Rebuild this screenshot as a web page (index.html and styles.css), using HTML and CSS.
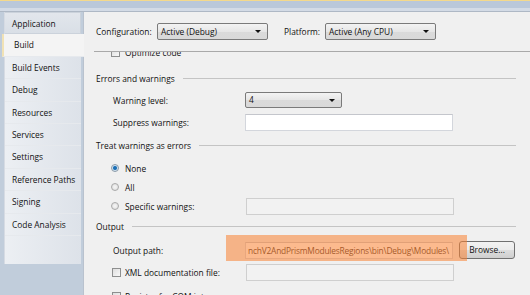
FILE: index.html
```html
<!DOCTYPE html>
<html lang="en">

<head>
    <meta charset="UTF-8">
    <title>Project Properties - Build</title>
    <link rel="stylesheet" href="styles.css">
</head>

<body>
    <div class="top"></div>
    <div class="main">
        <div class="tabs">
            <div class="tab-list">
                <div class="tab">Application</div>
                <div class="tab active">Build</div>
                <div class="tab">Build Events</div>
                <div class="tab">Debug</div>
                <div class="tab">Resources</div>
                <div class="tab">Services</div>
                <div class="tab">Settings</div>
                <div class="tab">Reference Paths</div>
                <div class="tab">Signing</div>
                <div class="tab">Code Analysis</div>
                <div class="tab-tail"></div>
            </div>
        </div>

        <div class="panel">
            <div class="config">
                <span class="config-label">Configuration:</span>
                <div class="select config-select">Active (Debug)<span class="arrow"></span></div>
                <span class="config-label platform">Platform:</span>
                <div class="select config-select">Active (Any CPU)<span class="arrow"></span></div>
            </div>

            <div class="scroll">
                <div class="scroll-inner">
                    <div class="row row-optimize">
                        <span class="check"></span>
                        <span>Optimize code</span>
                    </div>

                    <div class="group">Errors and warnings<span class="rule"></span></div>
                    <div class="row row-level">
                        <span class="label">Warning level:</span>
                        <div class="select level-select">4<span class="arrow"></span></div>
                    </div>
                    <div class="row row-suppress">
                        <span class="label">Suppress warnings:</span>
                        <div class="input"></div>
                    </div>

                    <div class="group group-treat">Treat warnings as errors<span class="rule"></span></div>
                    <div class="row row-none">
                        <span class="radio checked"></span>
                        <span>None</span>
                    </div>
                    <div class="row row-all">
                        <span class="radio"></span>
                        <span>All</span>
                    </div>
                    <div class="row row-specific">
                        <span class="radio"></span>
                        <span class="label short">Specific warnings:</span>
                        <div class="input disabled"></div>
                    </div>

                    <div class="group group-output">Output<span class="rule"></span></div>
                    <div class="row row-path">
                        <span class="label">Output path:</span>
                        <div class="input path">nchV2AndPrismModulesRegions\bin\Debug\Modules\</div>
                        <div class="button">Browse...</div>
                        <div class="highlight"></div>
                    </div>
                    <div class="row row-xml">
                        <span class="check"></span>
                        <span class="label short">XML documentation file:</span>
                        <div class="input disabled"></div>
                    </div>
                    <div class="row row-com">
                        <span class="check"></span>
                        <span>Register for COM interop</span>
                    </div>
                </div>
            </div>
        </div>
    </div>
</body>

</html>
```

FILE: styles.css
```css
* {
    margin: 0;
    padding: 0;
    box-sizing: border-box;
}

body {
    width: 530px;
    height: 295px;
    overflow: hidden;
    background: #c1cddb;
    font-family: 'Open Sans', sans-serif;
    font-size: 8.4px;
    color: #111;
}

.top {
    height: 12px;
    border-top: 1px solid #f4d98c;
    background: linear-gradient(#bac8da 0 7px, #d3dbe6 7px 10px, #aeb8c5 10px);
}

.main {
    display: flex;
    height: 283px;
}

/* left tab column */
.tabs {
    width: 83px;
    padding-left: 4px;
}

.tab-list {
    width: 77px;
    background: linear-gradient(90deg, #eceff3, #dde2e9);
    border-left: 1px solid #d6dbe3;
}

.tab {
    height: 22.4px;
    line-height: 22px;
    padding-left: 7px;
    border-bottom: 1px solid #e6e9ed;
    white-space: nowrap;
}

.tab:first-child {
    background: linear-gradient(#e2e6ec, #d9dfe6);
    border: 1px solid #cbd2db;
    border-left: none;
}

.tab.active {
    background: #f4f4f4;
    margin-left: -3px;
    padding-left: 10px;
    width: 82px;
    border-left: 2px solid #f1e2b4;
    position: relative;
}

.tab-tail {
    height: 28px;
    background: linear-gradient(90deg, #eceff3, #dde2e9);
    clip-path: polygon(0 0, 100% 0, 100% 100%, 0 6px);
}

/* right property panel */
.panel {
    flex: 1;
    background: #f0f0f0;
    border-left: 1px solid #b9c2ce;
    display: flex;
    flex-direction: column;
}

.config {
    height: 40px;
    display: flex;
    align-items: center;
    margin-left: 10px;
    padding-left: 2px;
    border-bottom: 1px solid #a9a9a9;
}

.config-label {
    width: 61px;
}

.config-label.platform {
    margin-left: 16px;
    width: 41px;
}

.select {
    position: relative;
    height: 17px;
    line-height: 15px;
    padding-left: 3px;
    border: 1px solid #7a7a7a;
    border-radius: 2px;
    background: linear-gradient(#f3f3f3, #e6e6e6 50%, #dadada 51%, #d9d9d9);
}

.config-select {
    width: 111px;
}

.arrow {
    position: absolute;
    right: 6px;
    top: 6px;
    border-left: 3px solid transparent;
    border-right: 3px solid transparent;
    border-top: 3px solid #111;
}

.scroll {
    flex: 1;
    overflow: hidden;
}

.scroll-inner {
    margin-top: -14px;
    padding: 0 14px 0 12px;
}

.row {
    display: flex;
    align-items: center;
    padding-left: 17px;
    white-space: nowrap;
}

.label {
    width: 132px;
}

.label.short {
    width: 121px;
}

.group {
    display: flex;
    align-items: center;
    height: 24px;
}

.rule {
    flex: 1;
    height: 1px;
    margin-left: 8px;
    background: #c4c4c4;
}

.row-optimize {
    height: 28px;
    padding-left: 15px;
}

.row-optimize .check {
    margin-right: 5px;
}

.row-level {
    height: 20px;
}

.level-select {
    width: 97px;
    height: 16px;
    line-height: 14px;
}

.row-suppress {
    height: 24px;
}

.input {
    width: 208px;
    height: 17px;
    line-height: 15px;
    padding-left: 2px;
    background: #fff;
    border: 1px solid #d3d6dc;
    border-top-color: #c4c6cc;
}

.input.disabled {
    background: #f2f2f2;
    border-color: #cfcfcf;
}

.group-treat {
    height: 22px;
}

.row-none {
    height: 24px;
    padding-left: 15px;
}

.row-all {
    height: 14px;
    padding-left: 15px;
}

.radio {
    width: 8px;
    height: 8px;
    border-radius: 50%;
    border: 1px solid #a9a9a9;
    background: radial-gradient(#f6f6f6, #dcdcdc);
    margin-right: 6px;
}

.radio.checked {
    background: radial-gradient(#1b6fb5 0 1.5px, #cfe3f2 2.5px, #e5e5e5);
    border-color: #8a9aa9;
}

.row-specific {
    height: 24px;
    padding-left: 15px;
}

.group-output {
    height: 17px;
}

.row-path {
    height: 30px;
    position: relative;
}

.input.path {
    color: #3b2a1e;
    letter-spacing: -0.2px;
    overflow: hidden;
}

.button {
    width: 56px;
    height: 18px;
    margin-left: 6px;
    line-height: 16px;
    text-align: center;
    border: 1px solid #707070;
    border-radius: 3px;
    background: linear-gradient(#f2f2f2, #ebebeb 50%, #dddddd 51%, #cfcfcf);
}

.highlight {
    position: absolute;
    left: 130px;
    top: 0;
    width: 241px;
    height: 26px;
    background: rgba(250, 130, 50, 0.55);
}

.row-xml {
    height: 14px;
    padding-left: 16px;
}

.check {
    width: 9px;
    height: 9px;
    border: 1px solid #8e8f8f;
    background: linear-gradient(135deg, #dedede, #f8f8f8);
    margin-right: 4px;
}

.row-com {
    height: 34px;
    padding-left: 16px;
}
```
